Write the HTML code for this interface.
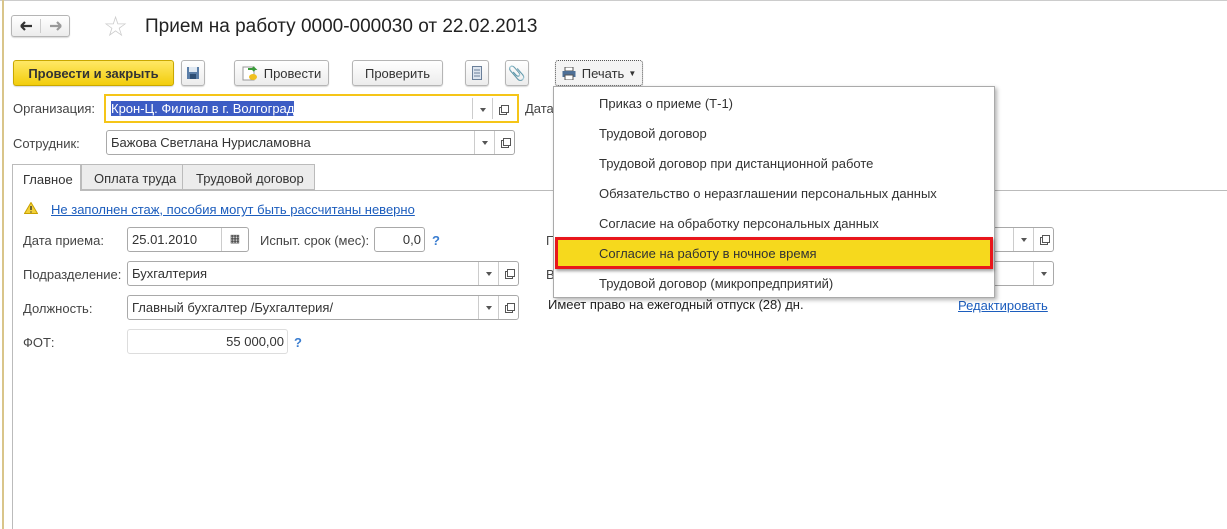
<!DOCTYPE html>
<html><head><meta charset="utf-8"><style>
*{box-sizing:border-box;margin:0;padding:0}
body{width:1227px;height:529px;background:#fff;position:relative;overflow:hidden;font-family:"Liberation Sans",Arial,sans-serif;font-size:13px;color:#333}
.a{position:absolute}
.btn{position:absolute;border:1px solid #b5b5b5;border-radius:3px;background:linear-gradient(#fff,#ececec);box-shadow:0 1px 1px rgba(0,0,0,.15);display:flex;align-items:center;justify-content:center;color:#333;font-size:13px}
.fld{position:absolute;border:1px solid #a9a9a9;border-radius:3px;background:#fff;height:25px;line-height:23px;padding-left:4px;color:#333}
.lbl{position:absolute;color:#444}
.dd{position:absolute;top:0;width:20px;height:100%;border-left:1px solid #ccc}
.dd:after{content:"";position:absolute;left:7px;top:10px;border:3px solid transparent;border-top:4px solid #555}
.op{position:absolute;top:0;width:20px;height:100%;border-left:1px solid #ccc}
.op:before{content:"";position:absolute;left:6px;top:9px;width:6px;height:6px;border:1px solid #555}
.op:after{content:"";position:absolute;left:8px;top:7px;width:6px;height:6px;border:1px solid #555;background:#fff}
.mi{position:absolute;left:45px;font-size:13px;color:#333}
.q{position:absolute;color:#3a7dd0;font-weight:bold;font-size:13px}
</style></head><body>
<div class="a" style="left:0;top:0;width:1227px;height:1px;background:#ccc"></div>
<div class="a" style="left:2px;top:0;width:2px;height:529px;background:#d9c58a"></div>
<!-- nav -->
<div class="btn" style="left:11px;top:15px;width:59px;height:22px;justify-content:flex-start">
<svg width="29" height="14" style="border-right:1px solid #ccc"><path d="M9 7h11M9 7l4-4M9 7l4 4" stroke="#333" stroke-width="2.2" fill="none"/></svg><svg width="29" height="14"><path d="M20 7H9M20 7l-4-4M20 7l-4 4" stroke="#999" stroke-width="2.2" fill="none"/></svg></div>
<div class="a" style="left:103px;top:10px;font-size:28px;color:#ccc">☆</div>
<div class="a" style="left:145px;top:16px;font-size:19px;color:#222">Прием на работу 0000-000030 от 22.02.2013</div>
<!-- toolbar -->
<div class="btn" style="left:13px;top:60px;width:161px;height:26px;background:linear-gradient(#ffe866,#f2cd0c);border-color:#c9a800;font-weight:bold;color:#333">Провести и закрыть</div>
<div class="btn" style="left:181px;top:60px;width:24px;height:26px"><svg width="14" height="14"><rect x="1" y="1" width="12" height="12" fill="#5b7ea8"/><rect x="3" y="1" width="8" height="5" fill="#dfe8f2"/><rect x="4" y="8" width="6" height="5" fill="#2f4f75"/></svg></div>
<div class="btn" style="left:234px;top:60px;width:95px;height:26px"><svg width="16" height="16" style="margin-right:6px"><rect x="1" y="2" width="11" height="13" fill="#fff" stroke="#999"/><path d="M6 4h7l-2-2M13 4l-2 2" stroke="#3a9a3a" stroke-width="2" fill="none"/><ellipse cx="11" cy="12" rx="4" ry="3" fill="#f0c020"/></svg>Провести</div>
<div class="btn" style="left:352px;top:60px;width:91px;height:26px">Проверить</div>
<div class="btn" style="left:465px;top:60px;width:24px;height:26px"><svg width="10" height="14"><rect x="0.5" y="0.5" width="9" height="13" fill="#dde5ef" stroke="#6a7f99"/><path d="M2 4h6M2 7h6M2 10h6" stroke="#6a7f99"/></svg></div>
<div class="btn" style="left:505px;top:60px;width:24px;height:26px;font-size:14px;color:#777">&#128206;</div>
<div class="btn" style="left:555px;top:60px;width:88px;height:26px;border:1px dotted #555;background:#f4f4f4"><svg width="14" height="13" style="margin-right:6px"><rect x="3" y="0" width="8" height="4" fill="#fff" stroke="#555"/><rect x="0.5" y="4" width="13" height="6" fill="#4d6f96"/><rect x="3" y="8" width="8" height="5" fill="#fff" stroke="#555"/></svg>Печать <span style="font-size:8px;margin-left:4px">▼</span></div>
<!-- org -->
<div class="lbl" style="left:13px;top:101px">Организация:</div>
<div class="fld" style="left:104px;top:94px;width:415px;height:29px;border:2px solid #f5c518;border-radius:0;line-height:25px;padding-left:5px"><span style="background:#3c5cc4;color:#fff">Крон-Ц. Филиал в г. Волгоград</span><div class="dd" style="left:366px;top:2px;height:21px"></div><div class="op" style="left:386px;top:2px;height:21px;border-left:1px solid #ccc"></div></div>
<div class="lbl" style="left:525px;top:101px">Дата</div>
<div class="lbl" style="left:13px;top:136px">Сотрудник:</div>
<div class="fld" style="left:106px;top:130px;width:409px"><span>Бажова Светлана Нурисламовна</span><div class="dd" style="left:367px"></div><div class="op" style="left:387px"></div></div>
<!-- tabs -->
<div class="a" style="left:80px;top:190px;width:1147px;height:1px;background:#bbb"></div>
<div class="a" style="left:12px;top:190px;width:1px;height:339px;background:#bbb"></div>
<div class="a" style="left:12px;top:164px;width:69px;height:27px;border:1px solid #bbb;border-bottom:none;background:#fff;padding:7px 0 0 10px;color:#333">Главное</div>
<div class="a" style="left:81px;top:164px;width:102px;height:26px;border:1px solid #bbb;background:#ececec;padding:6px 0 0 12px;color:#333">Оплата труда</div>
<div class="a" style="left:182px;top:164px;width:133px;height:26px;border:1px solid #bbb;background:#ececec;padding:6px 0 0 13px;color:#333">Трудовой договор</div>
<!-- warning -->
<svg class="a" style="left:24px;top:202px" width="14" height="12"><path d="M7 0.5L13.5 11.5H0.5Z" fill="#f2d13a" stroke="#c9a100"/><path d="M7 4v4M7 9.5v1" stroke="#333" stroke-width="1.4"/></svg>
<div class="a" style="left:51px;top:202px;color:#1c5dbd;text-decoration:underline">Не заполнен стаж, пособия могут быть рассчитаны неверно</div>
<div class="lbl" style="left:23px;top:233px">Дата приема:</div>
<div class="fld" style="left:127px;top:227px;width:122px">25.01.2010<div class="a" style="left:93px;top:0;width:27px;height:23px;border-left:1px solid #ccc;text-align:center;font-size:11px">&#9638;</div></div>
<div class="lbl" style="left:260px;top:233px">Испыт. срок (мес):</div>
<div class="fld" style="left:374px;top:227px;width:51px;text-align:right;padding-right:3px">0,0</div>
<div class="q" style="left:432px;top:233px">?</div>
<div class="lbl" style="left:23px;top:267px">Подразделение:</div>
<div class="fld" style="left:127px;top:261px;width:392px">Бухгалтерия<div class="dd" style="left:350px"></div><div class="op" style="left:370px"></div></div>
<div class="lbl" style="left:23px;top:301px">Должность:</div>
<div class="fld" style="left:127px;top:295px;width:392px">Главный бухгалтер /Бухгалтерия/<div class="dd" style="left:350px"></div><div class="op" style="left:370px"></div></div>
<div class="lbl" style="left:23px;top:335px">ФОТ:</div>
<div class="fld" style="left:127px;top:329px;width:161px;text-align:right;padding-right:3px;border-color:#ddd">55 000,00</div>
<div class="q" style="left:294px;top:335px">?</div>
<!-- right -->
<div class="lbl" style="left:546px;top:233px">П</div>
<div class="lbl" style="left:546px;top:267px">В</div>
<div class="fld" style="left:960px;top:227px;width:94px"><div class="dd" style="left:52px"></div><div class="op" style="left:72px"></div></div>
<div class="fld" style="left:960px;top:261px;width:94px"><div class="dd" style="left:72px"></div></div>
<div class="a" style="left:548px;top:297px;color:#222">Имеет право на ежегодный отпуск (28) дн.</div>
<div class="a" style="left:958px;top:298px;color:#1c5dbd;text-decoration:underline">Редактировать</div>
<!-- menu -->
<div class="a" style="left:553px;top:86px;width:442px;height:212px;background:#fff;border:1px solid #aaa;box-shadow:2px 2px 4px rgba(0,0,0,.3)">
<div class="mi" style="top:9px">Приказ о приеме (Т-1)</div>
<div class="mi" style="top:39px">Трудовой договор</div>
<div class="mi" style="top:69px">Трудовой договор при дистанционной работе</div>
<div class="mi" style="top:99px">Обязательство о неразглашении персональных данных</div>
<div class="mi" style="top:129px">Согласие на обработку персональных данных</div>
<div class="a" style="left:1px;top:150px;width:438px;height:32px;background:#f6d91d;border:3px solid #e8161b;box-shadow:1px 2px 3px rgba(0,0,0,.4)"></div>
<div class="mi" style="top:159px">Согласие на работу в ночное время</div>
<div class="mi" style="top:189px">Трудовой договор (микропредприятий)</div>
</div>
</body></html>
